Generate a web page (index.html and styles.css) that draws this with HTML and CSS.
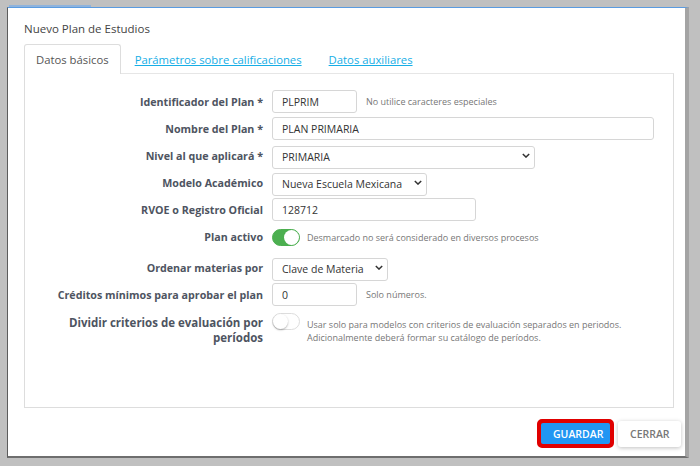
FILE: index.html
```html
<!DOCTYPE html>
<html lang="es">
<head>
  <meta charset="UTF-8" />
  <title>Nuevo Plan de Estudios</title>
  <link rel="stylesheet" href="styles.css">
</head>
<body>
  <div class="backdrop-strip"></div>
  <div class="modal">
    <h2 class="modal-title">Nuevo Plan de Estudios</h2>

    <!-- Tabs -->
    <ul class="tabs">
      <li class="tab active">Datos básicos</li>
      <li class="tab"><a href="#">Parámetros sobre calificaciones</a></li>
      <li class="tab"><a href="#">Datos auxiliares</a></li>
    </ul>

    <div class="tab-panel">
      <div class="form-grid">
        <label class="lbl">Identificador del Plan *</label>
        <div class="field">
          <input class="inp w-sm" type="text" value="PLPRIM">
          <span class="help">No utilice caracteres especiales</span>
        </div>

        <label class="lbl">Nombre del Plan *</label>
        <div class="field">
          <input class="inp w-xl" type="text" value="PLAN PRIMARIA">
        </div>

        <label class="lbl">Nivel al que aplicará *</label>
        <div class="field">
          <div class="select-wrap w-lg">
            <select class="inp"><option>PRIMARIA</option></select>
            <svg class="chev" viewBox="0 0 10 6"><path d="M1 1l4 4 4-4" /></svg>
          </div>
        </div>

        <label class="lbl">Modelo Académico</label>
        <div class="field">
          <div class="select-wrap w-md">
            <select class="inp"><option>Nueva Escuela Mexicana</option></select>
            <svg class="chev" viewBox="0 0 10 6"><path d="M1 1l4 4 4-4" /></svg>
          </div>
        </div>

        <label class="lbl">RVOE o Registro Oficial</label>
        <div class="field">
          <input class="inp w-rv" type="text" value="128712">
        </div>

        <label class="lbl toggle-row">Plan activo</label>
        <div class="field toggle-field toggle-row">
          <span class="switch on"><span class="knob"></span></span>
          <span class="help">Desmarcado no será considerado en diversos procesos</span>
        </div>

        <label class="lbl">Ordenar materias por</label>
        <div class="field">
          <div class="select-wrap w-ord">
            <select class="inp"><option>Clave de Materia</option></select>
            <svg class="chev" viewBox="0 0 10 6"><path d="M1 1l4 4 4-4" /></svg>
          </div>
        </div>

        <label class="lbl">Créditos mínimos para aprobar el plan</label>
        <div class="field">
          <input class="inp w-sm" type="text" value="0">
          <span class="help">Solo números.</span>
        </div>

        <label class="lbl multi">Dividir criterios de evaluación por períodos</label>
        <div class="field toggle-field multi">
          <span class="switch"><span class="knob"></span></span>
          <span class="help">Usar solo para modelos con criterios de evaluación separados en periodos.<br>Adicionalmente deberá formar su catálogo de períodos.</span>
        </div>
      </div>
    </div>

    <div class="modal-footer">
      <span class="highlight"><button class="btn btn-primary">GUARDAR</button></span>
      <button class="btn btn-light">CERRAR</button>
    </div>
  </div>
</body>
</html>
```

FILE: styles.css
```css
/* BASE */
* {
  margin: 0;
  padding: 0;
  box-sizing: border-box;
}
body {
  font-family: "Open Sans", Arial, sans-serif;
  background: #c0c0c0;
  color: #333;
  width: 700px;
  height: 466px;
  overflow: hidden;
}
.backdrop-strip {
  width: 82px;
  height: 2px;
  margin: 5px 0 0 9px;
  background: #8fb3dc;
}
/* MODAL */
.modal {
  width: 682px;
  height: 451px;
  margin: 0 0 0 7px;
  background: #fff;
  border-top: 1px solid #5a9be0;
  border-left: 1px solid #5c5c5c;
  border-bottom: 2px solid #6e6e6e;
  border-right: 4px solid #a4a4a4;
  padding: 10px 11px 0 16px;
  display: flex;
  flex-direction: column;
}
.modal-title {
  font-size: 11.5px;
  font-weight: 400;
  line-height: 20px;
  padding-top: 1px;
  color: #444;
}
/* TABS */
.tabs {
  list-style: none;
  display: flex;
  margin-top: 5px;
  height: 29px;
  position: relative;
  z-index: 1;
}
.tab {
  padding: 0 12px;
  font-size: 11.3px;
  line-height: 29px;
  border: 1px solid transparent;
  border-bottom: none;
  margin-right: 1px;
}
.tab.active {
  background: #fff;
  border-color: #ddd;
  border-radius: 3px 3px 0 0;
  color: #555;
  height: 30px;
  padding: 0 11px;
}
.tab a {
  color: #16aee6;
  text-decoration: underline;
}
.tab-panel {
  border: 1px solid #ddd;
  border-top-color: #e6e6e6;
  height: 335px;
  padding: 16px 10px 16px 26px;
}
/* FORM */
.form-grid {
  display: grid;
  grid-template-columns: 212px 1fr;
  grid-template-rows: repeat(5, 23px) 27px 23px 23px auto;
  column-gap: 9px;
  row-gap: 4px;
}
.lbl {
  font-size: 10.7px;
  font-weight: 700;
  color: #4e5461;
  text-align: right;
  display: flex;
  align-items: center;
  justify-content: flex-end;
}
.field {
  display: flex;
  align-items: center;
  gap: 9px;
}
.toggle-field {
  gap: 7px;
}
.toggle-row {
  padding-bottom: 3px;
}
.lbl.multi {
  font-size: 11.5px;
  line-height: 15px;
  padding-top: 5px;
  align-items: flex-start;
}
.field.multi {
  align-items: flex-start;
  padding-top: 3px;
}
.field.multi .help {
  margin-top: 5px;
}
.inp {
  height: 23px;
  border: 1px solid #d6d6d6;
  border-radius: 3px;
  padding: 0 9px;
  font-family: "Open Sans", Arial, sans-serif;
  font-size: 10.5px;
  color: #333;
  background: #fff;
  outline: none;
}
.w-sm { width: 85px; }
.w-xl { width: 382px; }
.w-lg { width: 263px; }
.w-md { width: 155px; }
.w-rv { width: 204px; }
.w-ord { width: 116px; }
.select-wrap {
  position: relative;
  height: 23px;
}
.select-wrap select {
  width: 100%;
  appearance: none;
  -webkit-appearance: none;
}
.chev {
  position: absolute;
  right: 5px;
  top: 9px;
  width: 8px;
  height: 5px;
  fill: none;
  stroke: #333;
  stroke-width: 1.8;
}
.help {
  font-size: 9px;
  color: #777;
  line-height: 13px;
}
/* SWITCH */
.switch {
  width: 28px;
  height: 17px;
  border-radius: 9px;
  background: #fff;
  border: 1px solid #ddd;
  position: relative;
  flex-shrink: 0;
}
.switch .knob {
  position: absolute;
  top: 0;
  left: 0;
  width: 15px;
  height: 15px;
  border-radius: 50%;
  background: #fff;
  box-shadow: 0 1px 2px rgba(0,0,0,0.3);
}
.switch.on {
  background: #4caf50;
  border-color: #4caf50;
}
.switch.on .knob {
  left: 11px;
  box-shadow: none;
}
/* FOOTER */
.modal-footer {
  display: flex;
  justify-content: flex-end;
  align-items: center;
  gap: 4px;
  margin-top: 11px;
  margin-right: -7px;
}
.highlight {
  display: inline-flex;
  border: 3px solid #e00000;
  border-radius: 5px;
  padding: 1px;
  background: #e00000;
}
.btn {
  font-family: "Open Sans", Arial, sans-serif;
  font-size: 10.5px;
  font-weight: 600;
  border: none;
  border-radius: 2px;
  height: 21px;
  padding: 0 12px;
  cursor: pointer;
}
.btn-primary {
  background: #2196f3;
  color: #fff;
  width: 69px;
}
.btn-light {
  background: #fff;
  color: #777;
  height: 26px;
  width: 63px;
  border-radius: 3px;
  box-shadow: 0 1px 4px rgba(0,0,0,0.25);
}
```
